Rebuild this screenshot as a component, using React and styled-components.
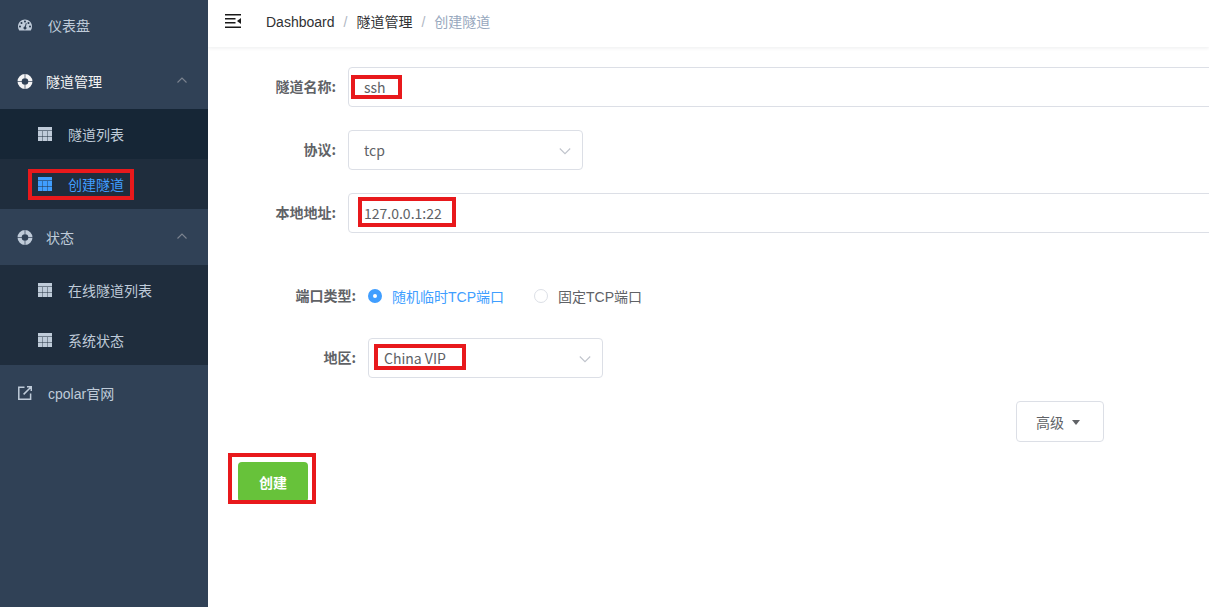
import React, { useState } from 'react'
import styled, { createGlobalStyle } from 'styled-components'

const DashboardIcon = () => (
  <svg viewBox="0 0 128 100" fill="currentColor" aria-hidden="true">
    <path d="M27.43 63.64c0-2.51-.9-4.65-2.68-6.42a8.8 8.8 0 0 0-6.46-2.67c-2.53 0-4.68.89-6.47 2.67a8.74 8.74 0 0 0-2.68 6.42c0 2.5.9 4.64 2.68 6.42a8.8 8.8 0 0 0 6.47 2.67c2.52 0 4.67-.89 6.46-2.67a8.74 8.74 0 0 0 2.68-6.42zm13.71-31.82c0-2.51-.9-4.65-2.68-6.43a8.8 8.8 0 0 0-6.46-2.66c-2.52 0-4.68.89-6.46 2.66a8.74 8.74 0 0 0-2.68 6.43c0 2.5.89 4.64 2.68 6.42a8.8 8.8 0 0 0 6.46 2.67c2.52 0 4.68-.89 6.46-2.67a8.74 8.74 0 0 0 2.68-6.42zm30.57 33.66l7.22-27.13c.28-1.23.1-2.38-.54-3.45a4.5 4.5 0 0 0-2.75-2.1 4.37 4.37 0 0 0-3.46.47 4.46 4.46 0 0 0-2.11 2.81l-7.21 27.13c-2.86.24-5.4 1.33-7.65 3.3-2.24 1.96-3.7 4.45-4.39 7.48-.95 3.64-.48 7.1 1.43 10.37 1.9 3.26 4.67 5.37 8.28 6.32 3.62.95 7.1.48 10.36-1.42 3.26-1.9 5.4-4.64 6.39-8.24.76-2.94.59-5.8-.5-8.59-1.1-2.79-2.79-5.1-5.07-6.95zm47.15-1.84c0-2.51-.9-4.65-2.68-6.42a8.8 8.8 0 0 0-6.47-2.67c-2.52 0-4.67.89-6.46 2.67a8.74 8.74 0 0 0-2.68 6.42c0 2.5.9 4.64 2.68 6.42a8.8 8.8 0 0 0 6.46 2.67c2.53 0 4.68-.89 6.47-2.67a8.74 8.74 0 0 0 2.68-6.42zM73.14 18.18c0-2.5-.89-4.65-2.68-6.42A8.8 8.8 0 0 0 64 9.09c-2.52 0-4.68.89-6.46 2.67a8.74 8.74 0 0 0-2.68 6.42c0 2.51.89 4.65 2.68 6.42A8.8 8.8 0 0 0 64 27.27c2.52 0 4.68-.89 6.46-2.67a8.74 8.74 0 0 0 2.68-6.42zm32 13.64c0-2.51-.89-4.65-2.68-6.43A8.8 8.8 0 0 0 96 22.73c-2.52 0-4.68.89-6.46 2.66a8.74 8.74 0 0 0-2.68 6.43c0 2.5.9 4.64 2.68 6.42A8.8 8.8 0 0 0 96 40.91c2.52 0 4.68-.89 6.46-2.67a8.74 8.74 0 0 0 2.68-6.42zM128 63.64c0 12.36-3.36 23.79-10.07 34.3-.9 1.37-2.19 2.06-3.86 2.06H13.93c-1.67 0-2.95-.69-3.86-2.06C3.36 87.5 0 76.06 0 63.64c0-8.62 1.69-16.86 5.07-24.72 3.38-7.86 7.93-14.63 13.64-20.32 5.72-5.68 12.53-10.2 20.43-13.56A62.97 62.97 0 0 1 64 0c8.67 0 16.95 1.68 24.86 5.04 7.9 3.36 14.71 7.88 20.43 13.56 5.71 5.69 10.26 12.46 13.64 20.32A62.1 62.1 0 0 1 128 63.64z" />
  </svg>
)

const RingIcon = () => (
  <svg viewBox="0 0 16 16" aria-hidden="true">
    <circle cx="8" cy="8.5" r="5.4" fill="none" stroke="currentColor" strokeWidth="4.2" />
    <path d="M8 1v4.5M8 11.5V16M0 8.5h5M11 8.5h5" stroke="#304156" strokeWidth="0.7" />
  </svg>
)

const TableIcon = () => (
  <svg viewBox="0 0 14 14" fill="currentColor" aria-hidden="true">
    <path d="M0 0h14v3H0zM0 4h4.4v5H0zM4.8 4h4.4v5H4.8zM9.6 4H14v5H9.6zM0 9.5h4.4V14H0zM4.8 9.5h4.4V14H4.8zM9.6 9.5H14V14H9.6z" />
    <path d="M0 3h14v1H0z" opacity="0.5" />
  </svg>
)

const LinkIcon = () => (
  <svg viewBox="0 0 14 14" fill="none" stroke="currentColor" strokeWidth="1.5" aria-hidden="true">
    <path d="M6.5 1.2H.8v12.1h11.8V7.5M5.6 8.4l7.2-7.2M9 .8h4.3V5" />
  </svg>
)

const FoldIcon = () => (
  <svg viewBox="0 0 16 14" fill="none" stroke="#1a1a1a" strokeWidth="1.5" aria-hidden="true">
    <path d="M0 .8h16M0 4.8h10.5M0 8.8h10.5M0 13.2h16" />
    <path d="M16 4v6l-4-3z" fill="#1a1a1a" stroke="none" />
  </svg>
)

const Arrow = ({ up }) => (
  <svg viewBox="0 0 12 12" fill="none" stroke="currentColor" strokeWidth="1.1" aria-hidden="true">
    <path d={up ? 'M1.5 8.5L6 4l4.5 4.5' : 'M.8 3.5L6 8.7l5.2-5.2'} />
  </svg>
)

const App = () => {
  const [name, setName] = useState('ssh')
  const [address, setAddress] = useState('127.0.0.1:22')
  const [portType, setPortType] = useState('random')

  return (
    <Layout>
      <GlobalStyle />
      <Sidebar>
        <HomeLink href="#dashboard">
          <Icon $size={14}><DashboardIcon /></Icon>
          仪表盘
        </HomeLink>
        <GroupButton type="button" $active>
          <Icon $size={16}><RingIcon /></Icon>
          隧道管理
          <GroupArrow><Arrow up /></GroupArrow>
        </GroupButton>
        <SubMenu>
          <SubLink href="#list" $hover>
            <Icon $size={14}><TableIcon /></Icon>
            隧道列表
          </SubLink>
          <SubLink href="#create" $active>
            <Icon $size={14}><TableIcon /></Icon>
            创建隧道
            <Highlight $left={28} $top={10} $width={106} $height={31} />
          </SubLink>
        </SubMenu>
        <GroupButton type="button">
          <Icon $size={16}><RingIcon /></Icon>
          状态
          <GroupArrow><Arrow up /></GroupArrow>
        </GroupButton>
        <SubMenu>
          <SubLink href="#online">
            <Icon $size={14}><TableIcon /></Icon>
            在线隧道列表
          </SubLink>
          <SubLink href="#status">
            <Icon $size={14}><TableIcon /></Icon>
            系统状态
          </SubLink>
        </SubMenu>
        <RootLink href="#site">
          <Icon $size={14}><LinkIcon /></Icon>
          cpolar官网
        </RootLink>
      </Sidebar>

      <Main>
        <Navbar>
          <FoldButton type="button" aria-label="Toggle sidebar"><FoldIcon /></FoldButton>
          <Breadcrumb>
            <Crumb href="#dashboard">Dashboard</Crumb>
            <Slash>/</Slash>
            <Crumb href="#tunnels">隧道管理</Crumb>
            <Slash>/</Slash>
            <Current>创建隧道</Current>
          </Breadcrumb>
        </Navbar>

        <Form onSubmit={(e) => e.preventDefault()}>
          <Row>
            <Label htmlFor="name">隧道名称:</Label>
            <WideField>
              <Input id="name" value={name} onChange={(e) => setName(e.target.value)} />
              <Highlight $left={3} $top={8} $width={51} $height={24} />
            </WideField>
          </Row>
          <Row>
            <Label htmlFor="protocol">协议:</Label>
            <SelectField>
              <Select id="protocol" defaultValue="tcp">
                <option value="tcp">tcp</option>
              </Select>
              <SelectArrow><Arrow /></SelectArrow>
            </SelectField>
          </Row>
          <Row>
            <Label htmlFor="address">本地地址:</Label>
            <WideField>
              <Input id="address" value={address} onChange={(e) => setAddress(e.target.value)} />
              <Highlight $left={10} $top={4} $width={98} $height={30} />
            </WideField>
          </Row>

          <Nested>
            <Row role="radiogroup" aria-labelledby="port-type">
              <Label as="span" id="port-type">端口类型:</Label>
              <RadioLabel $checked={portType === 'random'}>
                <Radio type="radio" name="port" checked={portType === 'random'} onChange={() => setPortType('random')} />
                随机临时TCP端口
              </RadioLabel>
              <RadioLabel $checked={portType === 'fixed'}>
                <Radio type="radio" name="port" checked={portType === 'fixed'} onChange={() => setPortType('fixed')} />
                固定TCP端口
              </RadioLabel>
            </Row>
            <Row>
              <Label htmlFor="region">地区:</Label>
              <SelectField>
                <Select id="region" defaultValue="cn_vip">
                  <option value="cn_vip">China VIP</option>
                </Select>
                <SelectArrow><Arrow /></SelectArrow>
                <Highlight $left={6} $top={6} $width={92} $height={26} />
              </SelectField>
            </Row>
          </Nested>

          <AdvancedRow>
            <AdvancedButton type="button">高级<Caret /></AdvancedButton>
          </AdvancedRow>
          <SubmitWrap>
            <SubmitButton type="submit">创建</SubmitButton>
            <Highlight $left={-10} $top={-9} $width={88} $height={51} />
          </SubmitWrap>
        </Form>
      </Main>
    </Layout>
  )
}

const GlobalStyle = createGlobalStyle`
    * {
        box-sizing: border-box;
    }
    body {
        margin: 0;
        font-family: "Liberation Sans", "Noto Sans CJK SC", sans-serif;
        font-size: 14px;
        color: #606266;
        background: #fff;
    }
    button, input, select {
        font-family: inherit;
        font-size: inherit;
    }
    svg {
        display: block;
        width: 100%;
        height: 100%;
    }
`
const Layout = styled.div`
    display: flex;
    min-height: 100vh;
`
const Sidebar = styled.nav`
    flex: 0 0 208px;
    background: #304156;
`
const RootLink = styled.a`
    display: flex;
    align-items: center;
    gap: 16px;
    height: 56px;
    padding-left: 18px;
    color: #bfcbd9;
    text-decoration: none;
`
const HomeLink = styled(RootLink)`
    height: 53px;
    padding-bottom: 3px;
`
const GroupButton = styled.button`
    display: flex;
    align-items: center;
    gap: 13px;
    width: 100%;
    height: 56px;
    padding: 0 20px 0 17px;
    border: none;
    background: transparent;
    color: ${({$active}) => $active ? '#f4f4f5' : '#bfcbd9'};
    cursor: pointer;
`
const GroupArrow = styled.span`
    width: 12px;
    height: 12px;
    margin: 0 0 2px auto;
    color: #7c8490;
`
const SubMenu = styled.div`
    background: #1f2d3d;
`
const SubLink = styled.a`
    position: relative;
    display: flex;
    align-items: center;
    gap: 16px;
    height: 50px;
    padding-left: 38px;
    color: ${({$active}) => $active ? '#409eff' : '#bfcbd9'};
    background: ${({$hover}) => $hover ? '#162636' : 'transparent'};
    text-decoration: none;
`
const Icon = styled.span`
    display: block;
    flex: none;
    width: ${({$size}) => $size}px;
    height: ${({$size}) => $size}px;
`
const Highlight = styled.span`
    position: absolute;
    left: ${({$left}) => $left}px;
    top: ${({$top}) => $top}px;
    width: ${({$width}) => $width}px;
    height: ${({$height}) => $height}px;
    border: 4px solid #e8191c;
    pointer-events: none;
`
const Main = styled.main`
    flex: 1;
    min-width: 0;
    overflow: hidden;
`
const Navbar = styled.header`
    display: flex;
    align-items: center;
    gap: 25px;
    height: 47px;
    padding: 0 17px 5px;
    box-shadow: 0 1px 4px rgba(0, 21, 41, 0.08);
`
const FoldButton = styled.button`
    width: 16px;
    height: 14px;
    padding: 0;
    border: none;
    background: transparent;
    cursor: pointer;
`
const Breadcrumb = styled.nav`
    display: flex;
    align-items: baseline;
`
const Crumb = styled.a`
    color: #303133;
    text-decoration: none;
`
const Slash = styled.span`
    margin: 0 9px;
    color: #b0b7c3;
`
const Current = styled.span`
    color: #97a8be;
`
const Form = styled.form`
    padding: 20px 0 0 20px;
`
const Row = styled.div`
    display: flex;
    align-items: center;
    height: 40px;
    margin-bottom: 23px;
`
const Label = styled.label`
    flex: 0 0 120px;
    padding: 0 12px 2px 0;
    font-family: "Noto Sans CJK SC", sans-serif;
    font-weight: 700;
    text-align: right;
`
const WideField = styled.div`
    position: relative;
    flex: 1;
    margin-right: -20px;
`
const SelectField = styled.div`
    position: relative;
    width: 235px;
`
const Input = styled.input`
    display: block;
    width: 100%;
    height: 40px;
    padding: 0 15px;
    border: 1px solid #dcdfe6;
    border-radius: 4px;
    outline: none;
    background: #fff;
    color: #606266;
    font-family: "Noto Sans CJK SC", sans-serif;
`
const Select = styled(Input).attrs({ as: 'select' })`
    appearance: none;
`
const SelectArrow = styled.span`
    position: absolute;
    top: 15px;
    right: 12px;
    width: 12px;
    height: 12px;
    color: #c0c4cc;
    pointer-events: none;
`
const Nested = styled.div`
    padding: 20px 0 0 20px;

    ${Row} {
        margin-bottom: 22px;
    }
`
const RadioLabel = styled.label`
    display: flex;
    align-items: center;
    gap: 10px;
    margin-right: 30px;
    color: ${({$checked}) => $checked ? '#409eff' : '#606266'};
    cursor: pointer;
`
const Radio = styled.input`
    appearance: none;
    width: 14px;
    height: 14px;
    margin: 0;
    border: 1px solid #dcdfe6;
    border-radius: 50%;
    background: #fff;

    &:checked {
        border: 5px solid #409eff;
    }
`
const AdvancedRow = styled.div`
    display: flex;
    justify-content: flex-end;
    padding: 1px 105px 0 0;
`
const AdvancedButton = styled.button`
    display: flex;
    align-items: center;
    gap: 8px;
    height: 41px;
    padding: 0 23px 0 19px;
    border: 1px solid #dcdfe6;
    border-radius: 4px;
    background: #fff;
    color: #606266;
    cursor: pointer;
`
const Caret = styled.span`
    margin-top: 2px;
    border: 5px solid transparent;
    border-width: 5px 4px 0;
    border-top-color: #606266;
`
const SubmitWrap = styled.div`
    position: relative;
    width: 70px;
    margin: 20px 0 0 10px;
`
const SubmitButton = styled.button`
    display: block;
    width: 100%;
    height: 40px;
    border: none;
    border-radius: 4px;
    background: #67c23a;
    color: #fff;
    font-weight: 700;
    cursor: pointer;
`

export default App
